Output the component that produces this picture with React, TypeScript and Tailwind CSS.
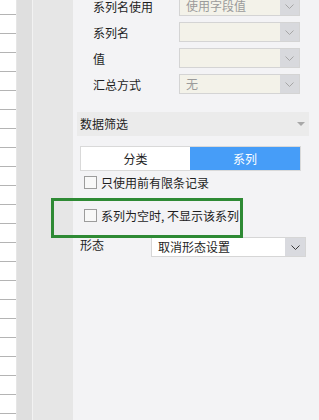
import React from 'react'

const font = { fontFamily: '"Noto Sans CJK SC", "Noto Sans", sans-serif' }

function Chevron({ className }: { className?: string }) {
  return (
    <svg width="9" height="5" viewBox="0 0 9 5" className={className}>
      <path d="M0.5 0.5 L4.5 4.5 L8.5 0.5" fill="none" stroke="currentColor" strokeWidth="1" />
    </svg>
  )
}

function FieldRow({ label, value }: { label: string; value?: string }) {
  return (
    <div className="flex h-5 items-center">
      <div className="h-5 w-[106px] pl-5 pt-[2px] text-[12px] leading-[18px] text-[#1e1e1e]">{label}</div>
      <div className="flex h-5 w-[121px] border border-[#d4d4d4] bg-[#f3f2e9]">
        <div className="flex-1 pl-[6px] text-[12px] leading-[18px] text-[#9b9b9b]">{value}</div>
        <div className="flex w-[19px] items-center justify-center bg-[#d8d9dd] text-[#a6a6a6]">
          <Chevron />
        </div>
      </div>
    </div>
  )
}

function Check({ label, className }: { label: string; className?: string }) {
  return (
    <div className={`ml-[11px] flex h-[13px] items-center ${className ?? ''}`}>
      <div className="h-[13px] w-[13px] border border-[#9c9c9c] bg-[#f8f8f8]" />
      <span className="ml-1 text-[12px] leading-[13px] text-[#1e1e1e]">{label}</span>
    </div>
  )
}

export default function App() {
  const lines = Array.from({ length: 22 })

  return (
    <div className="relative flex h-[420px] w-[319px] overflow-hidden bg-[#f3f3f5]" style={font}>
      {/* sheet rows */}
      <div className="flex w-[17px] flex-col border-r border-[#e6e6e6] bg-white">
        <div className="h-[15px] shrink-0 border-b border-[#b4b4b4]" />
        {lines.map((_, i) => (
          <div key={i} className="h-[19px] shrink-0 border-b border-[#b4b4b4]" />
        ))}
      </div>
      <div className="w-[15px] bg-[#dfdfdf]" />
      <div className="w-px bg-[#f2f2f2]" />
      <div className="w-[40px] bg-[#e6e6e6]" />

      {/* properties panel */}
      <div className="flex flex-1 flex-col">
        <div className="-mt-[4px] flex flex-col gap-[6px]">
          <FieldRow label="系列名使用" value="使用字段值" />
          <FieldRow label="系列名" />
          <FieldRow label="值" />
          <FieldRow label="汇总方式" value="无" />
        </div>

        <div className="ml-1 mt-[18px] flex h-6 w-[232px] items-center justify-between bg-[#ebebeb] pl-[3px] pr-1">
          <span className="text-[12px] text-[#1e1e1e]">数据筛选</span>
          <svg width="8" height="4" viewBox="0 0 8 4">
            <path d="M0 0 H8 L4 4 Z" fill="#a8a8a8" />
          </svg>
        </div>

        <div className="ml-[7px] mt-[10px] flex h-[25px] w-[221px] border border-[#d9d9d9]">
          <div className="flex w-[109px] items-center justify-center bg-white text-[12px] text-[#1e1e1e]">分类</div>
          <div className="flex flex-1 items-center justify-center bg-[#469df8] text-[12px] text-white">系列</div>
        </div>

        <Check label="只使用前有限条记录" className="mt-[5px]" />
        <Check label="系列为空时, 不显示该系列" className="mt-[20px]" />

        <div className="ml-[7px] mt-[15px] flex h-5 items-start">
          <span className="w-[71px] text-[12px] leading-4 text-[#1e1e1e]">形态</span>
          <div className="flex h-5 w-[155px] border border-[#d6d6d6] bg-white">
            <div className="flex-1 pl-[6px] text-[12px] leading-[18px] text-[#1e1e1e]">取消形态设置</div>
            <div className="flex w-[20px] items-center justify-center bg-[#d9dadf] text-[#3a3a3a]">
              <Chevron />
            </div>
          </div>
        </div>
      </div>

      {/* annotation */}
      <div className="absolute left-[51px] top-[198px] h-[40px] w-[192px] border-[3px] border-[#2e8a34]" />
    </div>
  )
}
